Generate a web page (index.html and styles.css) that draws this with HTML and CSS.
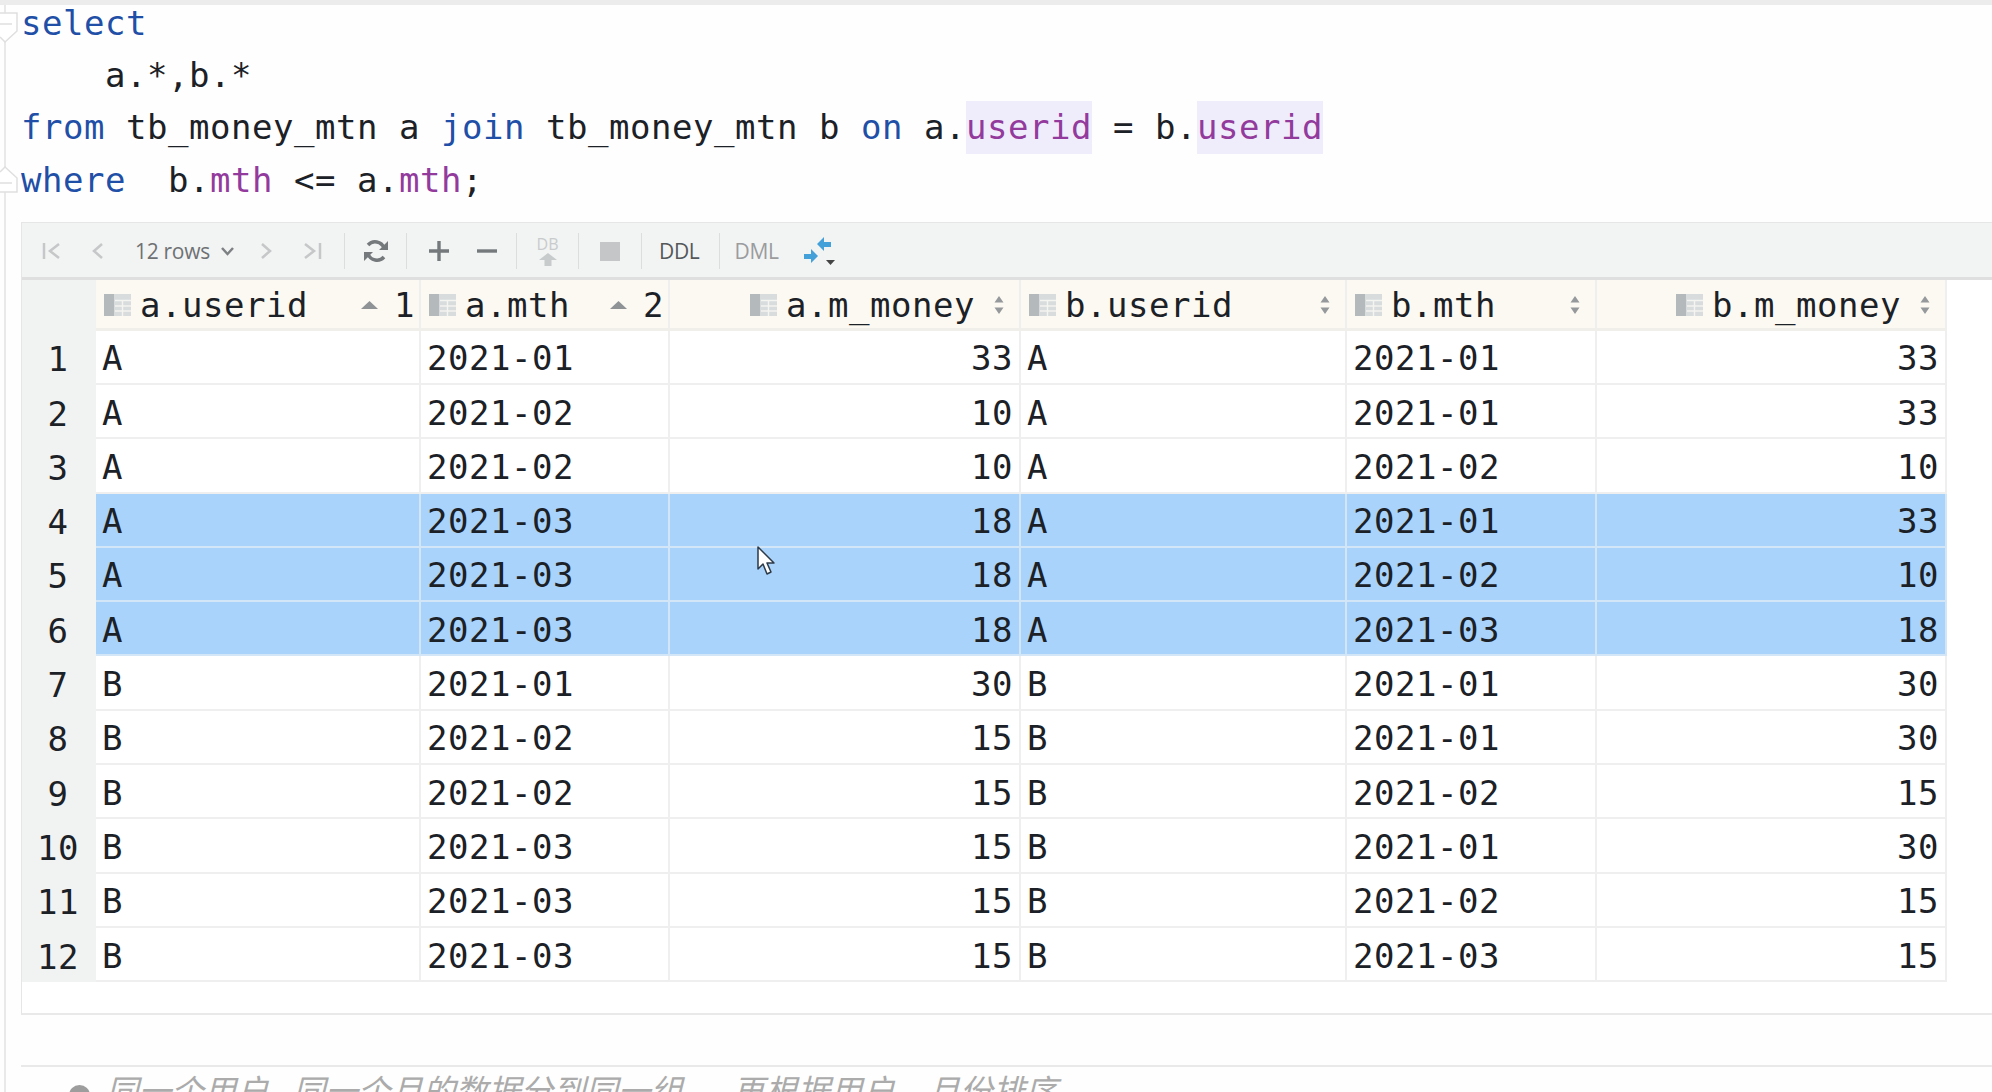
FILE: index.html
```html
<!DOCTYPE html>
<html lang="en">
<head>
<meta charset="utf-8">
<title>Query result</title>
<link rel="stylesheet" href="styles.css">
</head>
<body>
<div class="app">
  <div class="gutter">
    <svg class="fold fold-top" width="20" height="44" viewBox="0 0 20 44"><path d="M0 13H17V31L5 42L0 37M0 24H12" fill="#fff" stroke="#dfdfdf" stroke-width="1.5"/></svg>
    <svg class="fold fold-end" width="20" height="30" viewBox="0 0 20 30"><path d="M0 7L5 2L17 13V27H0M0 18H12" fill="#fff" stroke="#dfdfdf" stroke-width="1.5"/></svg>
  </div>
  <main class="main">
    <pre class="code"><span class="kw">select</span>
    a.*,b.*
<span class="kw">from</span> tb_money_mtn a <span class="kw">join</span> tb_money_mtn b <span class="kw">on</span> a.<span class="col hl">userid</span> = b.<span class="col hl">userid</span>
<span class="kw">where</span>  b.<span class="col">mth</span> &lt;= a.<span class="col">mth</span>;</pre>

    <section class="panel">
      <div class="toolbar">
        <button class="tb"><svg width="20" height="20" viewBox="0 0 20 20"><path d="M2 2V18M17 3L8 10L17 17" class="ic ic-off"/></svg></button>
        <button class="tb"><svg width="14" height="20" viewBox="0 0 14 20"><path d="M11 3L3 10L11 17" class="ic ic-off"/></svg></button>
        <div class="rows"><span>12 rows</span><svg width="15" height="10" viewBox="0 0 15 10"><path d="M2 2L7.500 8L13 2" class="ic ic-mid"/></svg></div>
        <button class="tb"><svg width="14" height="20" viewBox="0 0 14 20"><path d="M3 3L11 10L3 17" class="ic ic-off"/></svg></button>
        <button class="tb"><svg width="20" height="20" viewBox="0 0 20 20"><path d="M18 2V18M3 3L12 10L3 17" class="ic ic-off"/></svg></button>
        <i class="sep first-sep"></i>
        <button class="tb tb-wide"><svg width="26" height="26" viewBox="0 0 26 26"><path d="M21 10A9.500 9.500 0 0 0 5 7M5 16A9.500 9.500 0 0 0 21 19" class="ic ic-dark"/><path d="M25 3V12H16ZM1 23V14H10Z" fill="#75797c"/></svg></button>
        <i class="sep"></i>
        <button class="tb tb-plus"><svg width="22" height="22" viewBox="0 0 22 22"><path d="M11 1V21M1 11H21" class="ic ic-dark"/></svg></button>
        <button class="tb"><svg width="22" height="22" viewBox="0 0 22 22"><path d="M1 11H21" class="ic ic-dark"/></svg></button>
        <i class="sep sep-minus"></i>
        <button class="tb tb-wide tb-db"><span>DB</span><svg width="18" height="13" viewBox="0 0 18 13"><path d="M9 0L18 7H12.500V13H5.500V7H0Z" fill="#c8cbcc"/></svg></button>
        <i class="sep"></i>
        <button class="tb tb-stop"><svg width="20" height="19" viewBox="0 0 20 19"><rect width="20" height="19" fill="#c4c6c7"/></svg></button>
        <i class="sep"></i>
        <span class="word word-ddl">DDL</span>
        <i class="sep"></i>
        <span class="word word-dml">DML</span>
        <svg class="compare" width="34" height="32" viewBox="0 0 34 32"><path d="M13 9L20 2V7H27V12H20V16ZM0 19H7V14L14 21L7 28V24H0Z" fill="#44a0d8"/><path d="M22 25H31L26.500 30Z" fill="#444"/></svg>
      </div>

      <div class="grid">
        <div class="row head">
          <div class="cell num"></div>
          <div class="cell"><svg class="tbl"><use href="#tbl"/></svg><span>a.userid</span><span class="order"><svg width="17" height="8" viewBox="0 0 17 8"><path d="M8.500 0L17 8H0Z"/></svg>1</span></div>
          <div class="cell"><svg class="tbl"><use href="#tbl"/></svg><span>a.mth</span><span class="order"><svg width="17" height="8" viewBox="0 0 17 8"><path d="M8.500 0L17 8H0Z"/></svg>2</span></div>
          <div class="cell r"><svg class="tbl"><use href="#tbl"/></svg><span>a.m_money</span><svg class="sorter"><use href="#sorter"/></svg></div>
          <div class="cell"><svg class="tbl"><use href="#tbl"/></svg><span>b.userid</span><svg class="sorter push"><use href="#sorter"/></svg></div>
          <div class="cell"><svg class="tbl"><use href="#tbl"/></svg><span>b.mth</span><svg class="sorter push"><use href="#sorter"/></svg></div>
          <div class="cell r"><svg class="tbl"><use href="#tbl"/></svg><span>b.m_money</span><svg class="sorter"><use href="#sorter"/></svg></div>
        </div>
        <div class="row"><div class="cell num">1</div><div class="cell">A</div><div class="cell">2021-01</div><div class="cell r">33</div><div class="cell">A</div><div class="cell">2021-01</div><div class="cell r">33</div></div>
        <div class="row"><div class="cell num">2</div><div class="cell">A</div><div class="cell">2021-02</div><div class="cell r">10</div><div class="cell">A</div><div class="cell">2021-01</div><div class="cell r">33</div></div>
        <div class="row"><div class="cell num">3</div><div class="cell">A</div><div class="cell">2021-02</div><div class="cell r">10</div><div class="cell">A</div><div class="cell">2021-02</div><div class="cell r">10</div></div>
        <div class="row sel"><div class="cell num">4</div><div class="cell">A</div><div class="cell">2021-03</div><div class="cell r">18</div><div class="cell">A</div><div class="cell">2021-01</div><div class="cell r">33</div></div>
        <div class="row sel"><div class="cell num">5</div><div class="cell">A</div><div class="cell">2021-03</div><div class="cell r">18</div><div class="cell">A</div><div class="cell">2021-02</div><div class="cell r">10</div></div>
        <div class="row sel"><div class="cell num">6</div><div class="cell">A</div><div class="cell">2021-03</div><div class="cell r">18</div><div class="cell">A</div><div class="cell">2021-03</div><div class="cell r">18</div></div>
        <div class="row"><div class="cell num">7</div><div class="cell">B</div><div class="cell">2021-01</div><div class="cell r">30</div><div class="cell">B</div><div class="cell">2021-01</div><div class="cell r">30</div></div>
        <div class="row"><div class="cell num">8</div><div class="cell">B</div><div class="cell">2021-02</div><div class="cell r">15</div><div class="cell">B</div><div class="cell">2021-01</div><div class="cell r">30</div></div>
        <div class="row"><div class="cell num">9</div><div class="cell">B</div><div class="cell">2021-02</div><div class="cell r">15</div><div class="cell">B</div><div class="cell">2021-02</div><div class="cell r">15</div></div>
        <div class="row"><div class="cell num">10</div><div class="cell">B</div><div class="cell">2021-03</div><div class="cell r">15</div><div class="cell">B</div><div class="cell">2021-01</div><div class="cell r">30</div></div>
        <div class="row"><div class="cell num">11</div><div class="cell">B</div><div class="cell">2021-03</div><div class="cell r">15</div><div class="cell">B</div><div class="cell">2021-02</div><div class="cell r">15</div></div>
        <div class="row"><div class="cell num">12</div><div class="cell">B</div><div class="cell">2021-03</div><div class="cell r">15</div><div class="cell">B</div><div class="cell">2021-03</div><div class="cell r">15</div></div>
      </div>
    </section>

    <div class="note"><i class="bullet"></i><em>同一个用户 同一个月的数据分到同一组，<span class="note-tail">再根据用户、月份排序</span></em></div>
  </main>
</div>

<svg class="cursor" width="20" height="30" viewBox="0 0 20 30"><path d="M2 1V23L7 18L11 28L15 26L11 17H18Z" fill="#fff" stroke="#2d3a48" stroke-width="1.500" stroke-linejoin="round"/></svg>

<svg class="defs" width="0" height="0">
  <symbol id="tbl" viewBox="0 0 27 22">
    <rect width="10" height="22" fill="#b4b9bc"/>
    <rect x="10" width="17" height="22" fill="#d9dcdd"/>
    <path d="M11 6.500H27M11 12H27M11 17H27M18.500 6V22" stroke="#f4f4f1" stroke-width="1.400"/>
  </symbol>
  <symbol id="sorter" viewBox="0 0 10 20">
    <path d="M5 1L9.500 7.500H.5ZM5 19L.5 12.500H9.500Z" fill="#96999c"/>
  </symbol>
</svg>
</body>
</html>
```

FILE: styles.css
```css
* { box-sizing: border-box; }

html, body {
  margin: 0;
  height: 100%;
  overflow: hidden;
  background: #fefefe;
}

.app {
  display: flex;
  height: 1092px;
  overflow: hidden;
  border-top: 5px solid #ececec;
  color: #1b2126;
  font-family: "DejaVu Sans Mono", "Liberation Mono", monospace;
  font-size: 34px;
  letter-spacing: .53px;
}

.gutter {
  position: relative;
  flex: 0 0 17px;
  margin-left: 4px;
  border-left: 2px solid #e9e9e9;
}

.fold { position: absolute; left: -6px; }
.fold-top { top: -5px; }
.fold-end { top: 160px; }

.main { flex: 1; min-width: 0; }

.code {
  margin: -8.500px 0 15.500px;
  font: inherit;
  line-height: 52.4px;
  white-space: pre;
}

.kw { color: #1f4fa6; }
.col { color: #933a9d; }
.hl { display: inline-block; background: #efedfb; }

.panel {
  height: 793px;
  border-left: 1px solid #e6e6e6;
  border-bottom: 2px solid #e9e9e9;
  background: #fff;
}

.toolbar {
  display: flex;
  align-items: center;
  height: 58px;
  padding-left: 7px;
  padding-top: 3px;
  border-top: 1px solid #e6e6e6;
  border-bottom: 3px solid #dfdfdf;
  background: #f2f3f3;
  font-family: "Open Sans", "Liberation Sans", sans-serif;
  font-size: 21px;
  letter-spacing: -.3px;
}

.tb {
  display: flex;
  flex: 0 0 46px;
  align-items: center;
  justify-content: center;
  height: 40px;
  padding: 0;
  border: 0;
  background: none;
}

.tb-wide { flex-basis: 61px; }
.tb-stop { flex-basis: 62px; }
.tb-plus { margin-left: 8px; flex-basis: 48px; }
.tb-plus + .tb { flex-basis: 48px; }

.tb-db { flex-direction: column; gap: 2px; }
.tb-db span {
  color: #c8cbcc;
  font: 16px/14px "Open Sans", sans-serif;
}

.ic { fill: none; stroke-width: 2.500; }
.ic-off { stroke: #c5c7c8; }
.ic-mid { stroke: #7e8184; }
.ic-dark { stroke: #75797c; stroke-width: 3.400; }

.rows {
  display: flex;
  flex: 0 0 122px;
  align-items: center;
  gap: 10px;
  padding-left: 14px;
  color: #6e7174;
}

.sep {
  flex: 0 0 1px;
  height: 36px;
  background: #dcdddd;
}

.first-sep { margin-left: 9px; }
.sep-minus { margin-left: 5px; }

.word { padding-right: 19px; color: #54585b; }
.word-ddl { padding-left: 17px; }
.word-dml { padding-left: 15px; color: #9a9c9e; }
.compare { margin-left: 6px; }

.grid {
  display: grid;
  grid-template-columns: 74px 325px 249px 351px 326px 250px 350px;
  grid-template-rows: 51px repeat(12, 54.300px);
  width: 1925px;
}

.row { display: contents; }

.cell {
  display: flex;
  align-items: center;
  padding: 3px 8px 0 6px;
  border-right: 2px solid #efefef;
  border-bottom: 2px solid #efefef;
  white-space: nowrap;
}

.cell.r { justify-content: flex-end; padding-right: 6px; }
.cell.num {
  justify-content: center;
  padding: 3px 2px 0 0;
  border: 0;
  background: #f1f2f2;
}

.head .cell {
  padding-top: 2px;
  padding-bottom: 0;
  border-bottom: 3px solid #f0efe9;
  background: #fbf9f1;
}

.head .cell.num { border: 0; background: #f1f2f2; }

.sel .cell {
  border-color: #d3e6f8;
  background: #a9d3fb;
}

.sel .cell.num { background: #f1f2f2; }

.tbl { flex: 0 0 27px; width: 27px; height: 22px; margin: 0 9px 0 2px; }

.sorter {
  flex: 0 0 10px;
  width: 10px;
  height: 20px;
  margin: 0 7px 0 20px;
}

.cell.r .sorter { margin: 0 9px 0 19px; }
.sorter.push { margin-left: auto; }

.order {
  display: flex;
  align-items: center;
  gap: 16px;
  margin-left: auto;
  margin-right: -4px;
}

.order svg { fill: #8f9395; }

.note {
  display: flex;
  align-items: flex-start;
  height: 100px;
  margin-top: 50px;
  padding: 18px 0 0 48px;
  border-top: 2px solid #e9e9e9;
  color: #ababab;
  font-family: "Noto Sans CJK SC", sans-serif;
  font-size: 32.500px;
  letter-spacing: 0;
  word-spacing: 17px;
  line-height: 34px;
}

.note em { margin-left: 16px; margin-top: -13px; }
.note-tail { margin-left: 17px; }

.bullet {
  flex: 0 0 21px;
  height: 21px;
  border-radius: 50%;
  background: #9d9d9d;
}

.cursor {
  position: absolute;
  left: 756px;
  top: 546px;
}

.defs { position: absolute; }
```
